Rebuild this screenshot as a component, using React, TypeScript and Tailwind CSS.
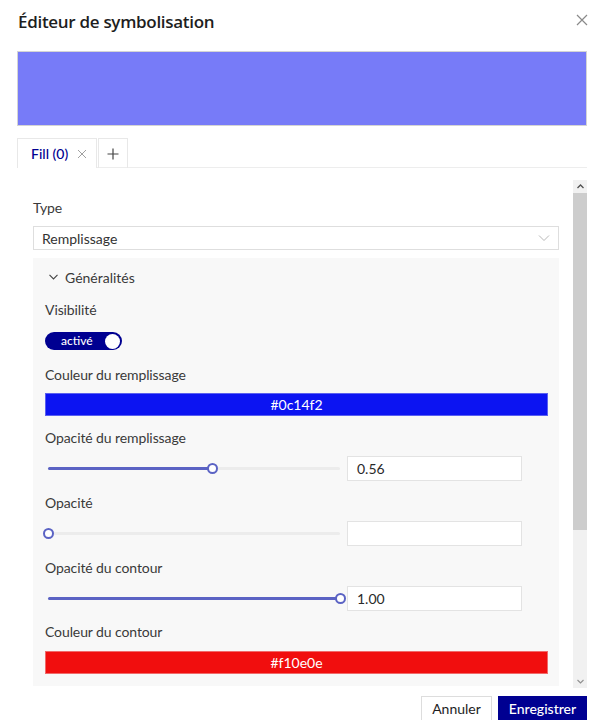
import React from 'react'

const body = "font-['Lato','Noto_Sans',sans-serif]"

function Slider({ value }: { value: number }) {
  // track is 292px wide
  const pos = Math.round(value * 292)
  return (
    <div className="w-[302px] h-[25px] flex items-center">
      <div className="relative ml-[3px] w-[292px] h-[3px] bg-[#ececec] rounded-full">
        <div className="absolute left-0 top-0 h-[3px] bg-[#5b63c4] rounded-full" style={{ width: pos }} />
        <div
          className="absolute top-[-4px] w-[11px] h-[11px] rounded-full bg-white border-2 border-[#5b63c4]"
          style={{ left: pos - 5 }}
        />
      </div>
    </div>
  )
}

function Label({ children, className }: { children: React.ReactNode; className?: string }) {
  return <div className={`h-[20px] leading-[20px] text-[14px] text-[#3a3a3a] tracking-[-0.1px] ${className || ''}`}>{children}</div>
}

function SliderRow({ label, value, text }: { label: string; value: number; text: string }) {
  return (
    <>
      <Label className="mt-[12px]">{label}</Label>
      <div className="mt-[8px] flex items-center">
        <Slider value={value} />
        <div className="w-[175px] h-[25px] bg-white border border-[#e3e3e3] pl-[9px] text-[14px] leading-[23px] text-[#2a2a2a]">
          {text}
        </div>
      </div>
    </>
  )
}

export default function App() {
  return (
    <div className={`w-[602px] h-[720px] bg-white overflow-hidden ${body}`}>
      {/* Header */}
      <div className="flex items-center justify-between pl-[18px] pr-[14px] h-[44px]">
        <h1 className="text-[17px] font-semibold text-[#1e1e1e] font-['Open_Sans',sans-serif] tracking-[-0.3px]">
          Éditeur de symbolisation
        </h1>
        <svg width="12" height="12" viewBox="0 0 12 12" className="mb-[4px]">
          <path d="M1 1 L11 11 M11 1 L1 11" stroke="#8a8a8a" strokeWidth="1.2" />
        </svg>
      </div>

      {/* Preview */}
      <div className="ml-[17px] mt-[7px] w-[570px] h-[75px] bg-[#777bf8] border border-[#d4d4d4]" />

      {/* Tabs */}
      <div className="ml-[17px] mt-[12px] w-[570px] h-[30px] flex border-b border-[#ededed]">
        <div className="w-[80px] h-[30px] flex items-center gap-[9px] pl-[13px] border border-b-0 border-[#e8e8e8] bg-white">
          <span className="text-[14px] font-medium text-[#000091]">Fill (0)</span>
          <svg width="10" height="10" viewBox="0 0 10 10">
            <path d="M1 1 L9 9 M9 1 L1 9" stroke="#a0a0a0" strokeWidth="1" />
          </svg>
        </div>
        <div className="ml-[1px] w-[30px] h-[30px] flex items-center justify-center border border-b-0 border-[#e8e8e8]">
          <svg width="12" height="12" viewBox="0 0 12 12">
            <path d="M6 0.5 V11.5 M0.5 6 H11.5" stroke="#444" strokeWidth="1.2" />
          </svg>
        </div>
      </div>

      {/* Scroll area */}
      <div className="ml-[17px] mt-[12px] w-[570px] h-[508px] flex">
        <div className="flex-1 overflow-hidden pl-[16px] pr-[14px] pt-[18px]">
          <Label>Type</Label>
          <div className="mt-[8px] h-[24px] flex items-center justify-between border border-[#dedede] bg-white pl-[8px] pr-[8px]">
            <span className="text-[14px] text-[#333]">Remplissage</span>
            <svg width="12" height="8" viewBox="0 0 12 8">
              <path d="M1 1.5 L6 6.5 L11 1.5" fill="none" stroke="#b8b8b8" strokeWidth="1" />
            </svg>
          </div>

          {/* Panel */}
          <div className="mt-[8px] bg-[#f8f8f8] pl-[12px] pr-[11px] pt-[9px] pb-[12px]">
            <div className="h-[20px] flex items-center gap-[7px] pl-[4px]">
              <svg width="9" height="6" viewBox="0 0 9 6">
                <path d="M0.5 0.8 L4.5 5 L8.5 0.8" fill="none" stroke="#444" strokeWidth="1.1" />
              </svg>
              <span className="text-[14px] text-[#3a3a3a]">Généralités</span>
            </div>

            <Label className="mt-[13px]">Visibilité</Label>
            <div className="mt-[12px] w-[77px] h-[18px] rounded-full bg-[#000091] flex items-center justify-between pl-[16px] pr-[2px]">
              <span className="text-[12px] font-medium text-white leading-none">activé</span>
              <div className="w-[15px] h-[15px] rounded-full bg-white" />
            </div>

            <Label className="mt-[15px]">Couleur du remplissage</Label>
            <div className="mt-[8px] h-[23px] bg-[#0c14f2] border border-[#5a60f0] flex items-center justify-center text-[14px] text-white">
              #0c14f2
            </div>

            <SliderRow label="Opacité du remplissage" value={0.56} text="0.56" />
            <SliderRow label="Opacité" value={0} text="" />
            <SliderRow label="Opacité du contour" value={1} text="1.00" />

            <Label className="mt-[11px]">Couleur du contour</Label>
            <div className="mt-[9px] h-[23px] bg-[#f10e0e] border border-[#f06a6a] flex items-center justify-center text-[14px] text-white">
              #f10e0e
            </div>
          </div>
        </div>

        {/* Scrollbar */}
        <div className="w-[14px] h-full bg-[#f1f1f1] flex flex-col">
          <div className="h-[13px] flex items-center justify-center">
            <svg width="7" height="5" viewBox="0 0 7 5">
              <path d="M0.5 4 L3.5 1 L6.5 4" fill="none" stroke="#505050" strokeWidth="1.3" />
            </svg>
          </div>
          <div className="h-[337px] bg-[#cdcdcd]" />
          <div className="flex-1" />
          <div className="h-[14px] flex items-center justify-center">
            <svg width="7" height="5" viewBox="0 0 7 5">
              <path d="M0.5 1 L3.5 4 L6.5 1" fill="none" stroke="#909090" strokeWidth="1.1" />
            </svg>
          </div>
        </div>
      </div>

      {/* Footer */}
      <div className="mt-[8px] flex justify-end gap-[6px] pr-[15px]">
        <button className="w-[71px] h-[28px] pb-[4px] bg-white border border-[#dddddd] text-[14px] text-[#1e1e1e]">Annuler</button>
        <button className="w-[89px] h-[28px] pb-[4px] bg-[#000091] text-[14px] font-medium text-white">Enregistrer</button>
      </div>
    </div>
  )
}
